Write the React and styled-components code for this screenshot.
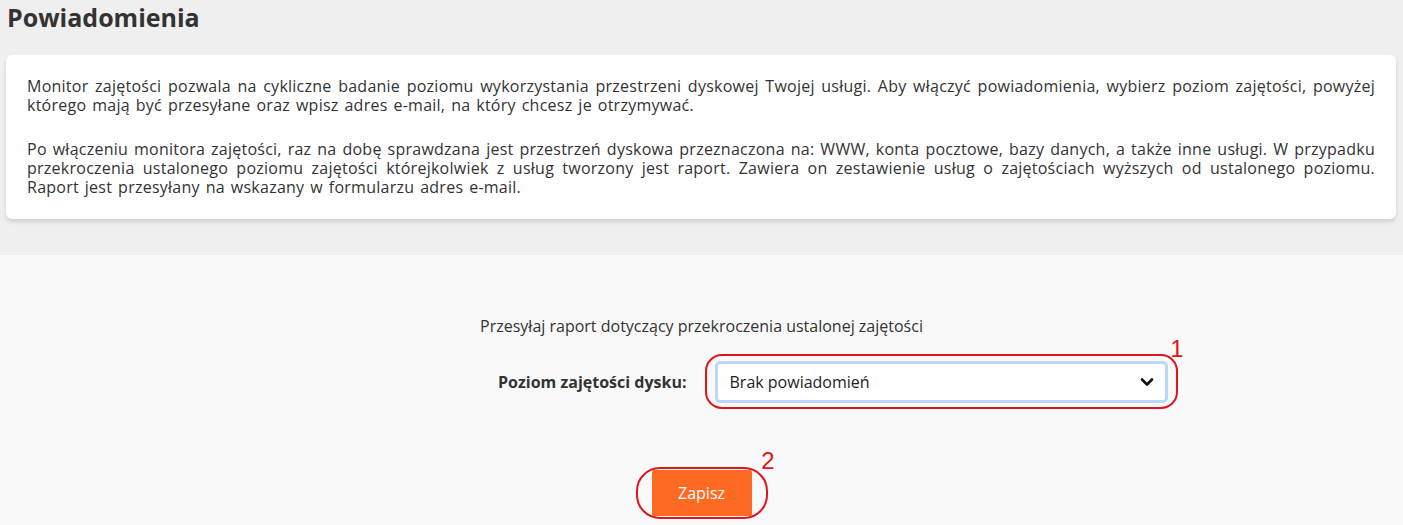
import styled, { createGlobalStyle } from "styled-components";

const GlobalStyle = createGlobalStyle`
    body{
        margin:0;
        background:#f9f9f9;
        font-family:"Open Sans", "Noto Sans", sans-serif;
        color:#333;
    }
`;

const TopBand = styled.div`
    background:#efefef;
    padding:0 7px 36px 6px;
`;
const Title = styled.h1`
    margin:0 0 21px 1px;
    font-size:25px;
    line-height:34px;
    font-weight:700;
    color:#333;
`;
const Card = styled.div`
    background:#fff;
    border-radius:6px;
    padding:22px 21px 22px;
    box-shadow:0 3px 4px rgba(0,0,0,0.13);
`;
const Para = styled.p`
    margin:0;
    font-size:16px;
    line-height:19px;
    letter-spacing:0.25px;
    word-spacing:1.5px;
    text-align:justify;
    color:#333;
    & + &{
        margin-top:25px;
    }
`;

const FormArea = styled.div`
    padding:62px 0 10px;
    display:flex;
    flex-direction:column;
    align-items:center;
`;
const Intro = styled.div`
    font-size:16px;
    line-height:19px;
    color:#333;
    text-align:center;
`;
const Row = styled.div`
    margin-top:25px;
    width:100%;
    display:grid;
    grid-template-columns:1fr 1fr;
    column-gap:26px;
    align-items:center;
`;
const Label = styled.label`
    text-align:right;
    padding-right:2px;
    font-size:16px;
    font-weight:700;
    color:#333;
`;
const Marked = styled.div`
    position:relative;
    justify-self:${p => p.$center ? "center" : "start"};
`;
const Ring = styled.div`
    position:absolute;
    inset:${p => p.$inset};
    border:2px solid #e3131b;
    border-radius:${p => p.$radius};
    pointer-events:none;
`;
const Num = styled.span`
    position:absolute;
    right:${p => p.$right};
    top:${p => p.$top};
    color:#e3131b;
    font-family:"Liberation Sans", Arial, sans-serif;
    font-size:24px;
    line-height:24px;
`;
const Select = styled.div`
    box-sizing:border-box;
    width:453px;
    height:42px;
    background:#fff;
    border:3px solid #bcd8f6;
    border-radius:5px;
    display:flex;
    align-items:center;
    justify-content:space-between;
    padding:0 11px 0 12px;
    font-size:16px;
    color:#222;
`;
const Chevron = () => (
    <svg width="14" height="10" viewBox="0 0 14 10">
        <path d="M2 2.5 L7 7.5 L12 2.5" fill="none" stroke="#111" strokeWidth="2.6" strokeLinecap="round" strokeLinejoin="round"/>
    </svg>
);
const ButtonWrap = styled.div`
    margin-top:67px;
`;
const Button = styled.button`
    width:100px;
    height:46px;
    border:0;
    border-radius:2px;
    background:#ff6a22;
    color:#fff;
    font-family:"Open Sans", sans-serif;
    font-size:16px;
    cursor:pointer;
`;

export default function App() {
    return (
        <>
            <GlobalStyle />
            <TopBand>
                <Title>Powiadomienia</Title>
                <Card>
                    <Para>
                        Monitor zajętości pozwala na cykliczne badanie poziomu wykorzystania przestrzeni dyskowej Twojej usługi. Aby włączyć powiadomienia, wybierz poziom zajętości, powyżej którego mają być przesyłane oraz wpisz adres e-mail, na który chcesz je otrzymywać.
                    </Para>
                    <Para>
                        Po włączeniu monitora zajętości, raz na dobę sprawdzana jest przestrzeń dyskowa przeznaczona na: WWW, konta pocztowe, bazy danych, a także inne usługi. W przypadku przekroczenia ustalonego poziomu zajętości którejkolwiek z usług tworzony jest raport. Zawiera on zestawienie usług o zajętościach wyższych od ustalonego poziomu. Raport jest przesyłany na wskazany w formularzu adres e-mail.
                    </Para>
                </Card>
            </TopBand>
            <FormArea>
                <Intro>Przesyłaj raport dotyczący przekroczenia ustalonej zajętości</Intro>
                <Row>
                    <Label>Poziom zajętości dysku:</Label>
                    <Marked>
                        <Select>
                            <span>Brak powiadomień</span>
                            <Chevron />
                        </Select>
                        <Ring $inset="-7px -10px -6px -10px" $radius="17px" />
                        <Num $right="-16px" $top="-24px">1</Num>
                    </Marked>
                </Row>
                <ButtonWrap>
                    <Marked $center>
                        <Button>Zapisz</Button>
                        <Ring $inset="-3px -16px -3px -16px" $radius="24px" />
                        <Num $right="-23px" $top="-21px">2</Num>
                    </Marked>
                </ButtonWrap>
            </FormArea>
        </>
    );
}
